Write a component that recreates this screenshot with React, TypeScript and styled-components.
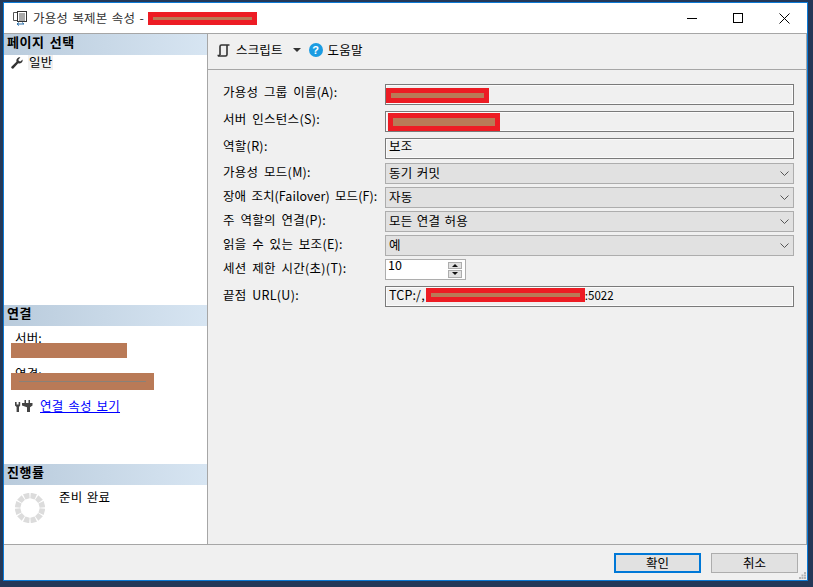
import React from "react";
import styled, { createGlobalStyle } from "styled-components";

const Global = createGlobalStyle`
  html, body { margin: 0; padding: 0; width: 813px; height: 587px; overflow: hidden; background: #243858; }
  * { box-sizing: border-box; }
  body { font-family: "Noto Sans CJK KR", "Noto Sans", sans-serif; font-size: 12.5px; color: #000; word-spacing: 1.5px; letter-spacing: 0.15px; }
`;

const Frame = styled.div`
  width: 813px;
  height: 587px;
  padding: 2px 5px 6px 3px;
  background: #243858;
`;
const Win = styled.div`
  width: 100%;
  height: 100%;
  display: flex;
  flex-direction: column;
  border: 1px solid #0c7ad6;
  background: #f0f0f0;
`;
const TitleBar = styled.header`
  height: 31px;
  flex: none;
  display: flex;
  align-items: center;
  padding-left: 9px;
  background: #fff;
  border-bottom: 1px solid #a6a6a6;
`;
const TitleText = styled.span`
  margin-left: 5px;
  color: #333;
  line-height: 16px;
`;
const Controls = styled.div`
  margin-left: auto;
  display: flex;
  height: 100%;
`;
const Ctl = styled.div`
  width: 46px;
  display: flex;
  align-items: center;
  justify-content: center;
`;
const Redact = styled.span<{ $w: number; $h: number; $b?: number; $ml?: number; $mt?: number }>`
  display: block;
  flex: none;
  width: ${(p) => p.$w}px;
  height: ${(p) => p.$h}px;
  margin-left: ${(p) => p.$ml ?? 0}px;
  margin-top: ${(p) => p.$mt ?? 0}px;
  border: ${(p) => p.$b ?? 5}px solid #ed1c24;
  background: #b97a57;
`;
const Body = styled.div`
  flex: 1;
  min-height: 0;
  display: flex;
  border-bottom: 1px solid #a6a6a6;
`;
const Sidebar = styled.aside`
  width: 204px;
  flex: none;
  display: flex;
  flex-direction: column;
  background: #fff;
  border-right: 1px solid #a6a6a6;
`;
const Section = styled.section<{ $h?: number }>`
  ${(p) => (p.$h ? `height: ${p.$h}px; flex: none;` : "flex: 1;")}
  min-height: 0;
`;
const SectionHead = styled.h2`
  margin: 0;
  height: 21px;
  padding-left: 3px;
  font-size: 13px;
  line-height: 16px;
  font-weight: 700;
  letter-spacing: 0.5px;
  word-spacing: 2px;
  background: linear-gradient(90deg, #b9cbdc 0%, #d7e5f2 100%);
`;
const PageItem = styled.div`
  display: flex;
  align-items: center;
  height: 15px;
  padding-left: 7px;
`;
const PageLabel = styled.span`
  margin-left: 5px;
  padding: 0 1px;
  background: #f0f0f0;
  line-height: 13px;
  height: 15px;
`;
const ConnLabel = styled.div<{ $mt: number }>`
  margin: ${(p) => p.$mt}px 0 0 11px;
  height: 17px;
  line-height: 17px;
`;
const Tan = styled.div<{ $w: number; $h: number; $mt: number }>`
  position: relative;
  margin: ${(p) => p.$mt}px 0 0 7px;
  width: ${(p) => p.$w}px;
  height: ${(p) => p.$h}px;
  background: #b97a57;
`;
const TanLine = styled.div`
  margin: 0 8px;
  height: 1px;
  transform: translateY(8px);
  background: #8a8178;
`;
const LinkRow = styled.div`
  display: flex;
  align-items: center;
  margin: 8px 0 0 11px;
  height: 16px;
`;
const A = styled.a`
  margin-left: 7px;
  color: #0000ff;
  text-decoration: underline;
  line-height: 16px;
  letter-spacing: 0.3px;
`;
const ProgressRow = styled.div`
  display: flex;
  padding: 8px 0 0 11px;
`;
const ProgressText = styled.span`
  margin-left: 14px;
  line-height: 16px;
  margin-top: -4px;
`;
const Main = styled.main`
  flex: 1;
  min-width: 0;
  display: flex;
  flex-direction: column;
  background: #f0f0f0;
  border-right: 1px solid #a6a6a6;
`;
const Toolbar = styled.div`
  height: 36px;
  flex: none;
  display: flex;
  align-items: center;
  padding: 0 0 3px 9px;
  border-bottom: 1px solid #a6a6a6;
`;
const ToolText = styled.span<{ $ml: number }>`
  margin-left: ${(p) => p.$ml}px;
  line-height: 16px;
`;
const Caret = styled.span`
  margin-left: 10px;
  width: 0;
  height: 0;
  border-left: 4px solid transparent;
  border-right: 4px solid transparent;
  border-top: 4px solid #333;
`;
const Help = styled.span`
  margin-left: 8px;
  width: 14px;
  height: 14px;
  border-radius: 50%;
  background: #1b9ce2;
  color: #fff;
  font: 700 11px/14px "Liberation Sans", sans-serif;
  text-align: center;
`;
const Form = styled.div`
  display: flex;
  flex-direction: column;
  padding: 14px 0 0 15px;
`;
const Row = styled.div<{ $mt?: number }>`
  display: grid;
  grid-template-columns: 162px 409px;
  align-items: center;
  height: 21px;
  margin-top: ${(p) => p.$mt ?? 0}px;
`;
const Label = styled.label<{ $dy?: number; $tight?: boolean }>`
  line-height: 16px;
  margin-top: ${(p) => -3 - (p.$dy ?? 0) * 2}px;
  white-space: nowrap;
  word-spacing: 2.5px;
  letter-spacing: ${(p) => (p.$tight ? 0.05 : 0.3)}px;
`;
const Field = styled.div<{ $pl?: number }>`
  height: 21px;
  display: flex;
  align-items: center;
  padding-left: ${(p) => p.$pl ?? 3}px;
  border: 1px solid #7a7a7a;
  box-shadow: inset 0 0 0 1px #fbfbfb;
  line-height: 16px;
`;
const FieldText = styled.span<{ $up: number }>`
  margin-top: ${(p) => -p.$up}px;
`;
const UrlPort = styled.span`
  margin-top: -3px;
  font-size: 11.5px;
  letter-spacing: 0;
`;
const Combo = styled.div`
  height: 21px;
  display: flex;
  align-items: center;
  justify-content: space-between;
  padding: 0 4px 0 3px;
  background: #e1e1e1;
  border: 1px solid #adadad;
  line-height: 16px;
`;
const ComboText = styled.span`
  margin-top: -2px;
`;
const Spin = styled.div`
  width: 81px;
  height: 21px;
  display: flex;
  align-items: center;
  justify-content: space-between;
  padding: 0 3px 0 2px;
  background: #fff;
  border: 1px solid #adadad;
  line-height: 16px;
`;
const SpinBtns = styled.div`
  display: flex;
  flex-direction: column;
  gap: 1px;
  width: 14px;
`;
const SpinBtn = styled.div<{ $up?: boolean }>`
  height: 7.5px;
  background: #e1e1e1;
  border: 1px solid #adadad;
  display: flex;
  align-items: center;
  justify-content: center;
  &::after {
    content: "";
    border-left: 3px solid transparent;
    border-right: 3px solid transparent;
    ${(p) => (p.$up ? "border-bottom: 3px solid #111;" : "border-top: 3px solid #111;")}
  }
`;
const Footer = styled.footer`
  height: 35px;
  flex: none;
  position: relative;
  display: flex;
  justify-content: flex-end;
  gap: 10px;
  padding: 8px 9px 0 0;
`;
const Btn = styled.button<{ $primary?: boolean }>`
  width: 87px;
  height: 20px;
  padding: 0;
  font: inherit;
  line-height: 14px;
  color: #000;
  background: #e1e1e1;
  border: ${(p) => (p.$primary ? "2px solid #0078d7" : "1px solid #adadad")};
`;
const Grip = styled.svg`
  position: absolute;
  right: 1px;
  bottom: 1px;
`;

const Chevron = () => (
  <svg width="9" height="5" viewBox="0 0 9 5" fill="none" stroke="#555" strokeWidth="1">
    <path d="M0.5 0.5 L4.5 4.5 L8.5 0.5" />
  </svg>
);

const Spinner = () => {
  const segs = Array.from({ length: 12 }, (_, i) => i * 30 + 15);
  return (
    <svg width="30" height="30" viewBox="-15 -15 30 30">
      {segs.map((a) => (
        <path key={a} d="M-3.2 -15 L3.2 -15 L2.2 -9.4 L-2.2 -9.4 Z" fill="#dcdcdc" transform={`rotate(${a})`} />
      ))}
    </svg>
  );
};

export default function App() {
  return (
    <Frame>
      <Global />
      <Win>
        <TitleBar>
          <svg width="15" height="15" viewBox="0 0 15 15" fill="none">
            <path d="M4.5 1.5h-4v8h4" stroke="#555" />
            <rect x="4.5" y="0.5" width="9" height="10" fill="#fff" stroke="#333" />
            <path d="M6 3h6M6 5h6M6 7h6M6 9h6" stroke="#555" />
            <path d="M4 13h7M4 13l2-1.5M4 13l2 1.5M11 13l-2-1.5" stroke="#2c6fa8" />
          </svg>
          <TitleText>가용성 복제본 속성 -</TitleText>
          <Redact $w={109} $h={13} $ml={4} />
          <Controls>
            <Ctl>
              <svg width="10" height="10" viewBox="0 0 10 10"><path d="M0 5.5h10" stroke="#000" /></svg>
            </Ctl>
            <Ctl>
              <svg width="10" height="10" viewBox="0 0 10 10" fill="none"><rect x="0.5" y="0.5" width="9" height="9" stroke="#000" /></svg>
            </Ctl>
            <Ctl>
              <svg width="11" height="11" viewBox="0 0 11 11" fill="none"><path d="M0.5 0.5l10 10M10.5 0.5l-10 10" stroke="#000" /></svg>
            </Ctl>
          </Controls>
        </TitleBar>
        <Body>
          <Sidebar>
            <Section>
              <SectionHead>페이지 선택</SectionHead>
              <PageItem>
                <svg width="12" height="12" viewBox="0 0 12 12">
                  <path d="M11.6 2.6a3.4 3.4 0 0 1-4.4 3.7L2.6 11.2a1.3 1.3 0 0 1-2-1.8l4.9-4.7A3.4 3.4 0 0 1 9.4.4L7.4 2.4l.4 1.6 1.6.4z" fill="#333" />
                </svg>
                <PageLabel>일반</PageLabel>
              </PageItem>
            </Section>
            <Section $h={159}>
              <SectionHead>연결</SectionHead>
              <ConnLabel $mt={3}>서버:</ConnLabel>
              <Tan $w={116} $h={15} $mt={-3} />
              <ConnLabel $mt={7}>연결:</ConnLabel>
              <Tan $w={143} $h={17} $mt={-9}><TanLine /></Tan>
              <LinkRow>
                <svg width="18" height="12" viewBox="0 0 18 12" fill="#444">
                  <path d="M0 2h1.6v2.5h2V2h1.6v3.6L4 7v5H1.6V7L0 5.6z" />
                  <path d="M7 3h10.5v2.6L15 7.2V12h-3V7.2L7 5.6zM9.5 0H11v3H9.5zM13.5 0H15v3h-1.5z" />
                </svg>
                <A href="#">연결 속성 보기</A>
              </LinkRow>
            </Section>
            <Section $h={80}>
              <SectionHead>진행률</SectionHead>
              <ProgressRow>
                <Spinner />
                <ProgressText>준비 완료</ProgressText>
              </ProgressRow>
            </Section>
          </Sidebar>
          <Main>
            <Toolbar>
              <svg width="13" height="13" viewBox="0 0 13 13" fill="none" stroke="#333" strokeWidth="1.6">
                <path d="M3 11V2.5C3 1.5 3.7 1 4.5 1H12.5M10 1.5V10.5C10 11.5 9.3 12 8.5 12H1M3 11.5H0.5" />
              </svg>
              <ToolText $ml={6}>스크립트</ToolText>
              <Caret />
              <Help>?</Help>
              <ToolText $ml={5}>도움말</ToolText>
            </Toolbar>
            <Form>
              <Row>
                <Label $dy={1}>가용성 그룹 이름(A):</Label>
                <Field $pl={0}><Redact $w={103} $h={15} $mt={1} /></Field>
              </Row>
              <Row $mt={6}>
                <Label $dy={1}>서버 인스턴스(S):</Label>
                <Field $pl={2}><Redact $w={112} $h={18} /></Field>
              </Row>
              <Row $mt={6}>
                <Label $dy={1}>역할(R):</Label>
                <Field><FieldText $up={5}>보조</FieldText></Field>
              </Row>
              <Row $mt={4}>
                <Label>가용성 모드(M):</Label>
                <Combo><ComboText>동기 커밋</ComboText><Chevron /></Combo>
              </Row>
              <Row $mt={3}>
                <Label $tight>장애 조치(Failover) 모드(F):</Label>
                <Combo><ComboText>자동</ComboText><Chevron /></Combo>
              </Row>
              <Row $mt={3}>
                <Label>주 역할의 연결(P):</Label>
                <Combo><ComboText>모든 연결 허용</ComboText><Chevron /></Combo>
              </Row>
              <Row $mt={3}>
                <Label>읽을 수 있는 보조(E):</Label>
                <Combo><ComboText>예</ComboText><Chevron /></Combo>
              </Row>
              <Row $mt={3}>
                <Label>세션 제한 시간(초)(T):</Label>
                <Spin>
                  <FieldText $up={9}>10</FieldText>
                  <SpinBtns>
                    <SpinBtn $up />
                    <SpinBtn />
                  </SpinBtns>
                </Spin>
              </Row>
              <Row $mt={6}>
                <Label $dy={0.5}>끝점 URL(U):</Label>
                <Field>
                  <FieldText $up={3}>TCP:/,</FieldText>
                  <Redact $w={159} $h={14} $ml={1} $mt={-3} />
                  <UrlPort>:5022</UrlPort>
                </Field>
              </Row>
            </Form>
          </Main>
        </Body>
        <Footer>
          <Btn $primary>확인</Btn>
          <Btn>취소</Btn>
          <Grip width="7" height="7" viewBox="0 0 7 7" fill="#b4b4b4">
            <path d="M5 0h2v2H5zM2.5 2.5h2v2h-2zM5 2.5h2v2H5zM0 5h2v2H0zM2.5 5h2v2h-2zM5 5h2v2H5z" />
          </Grip>
        </Footer>
      </Win>
    </Frame>
  );
}
